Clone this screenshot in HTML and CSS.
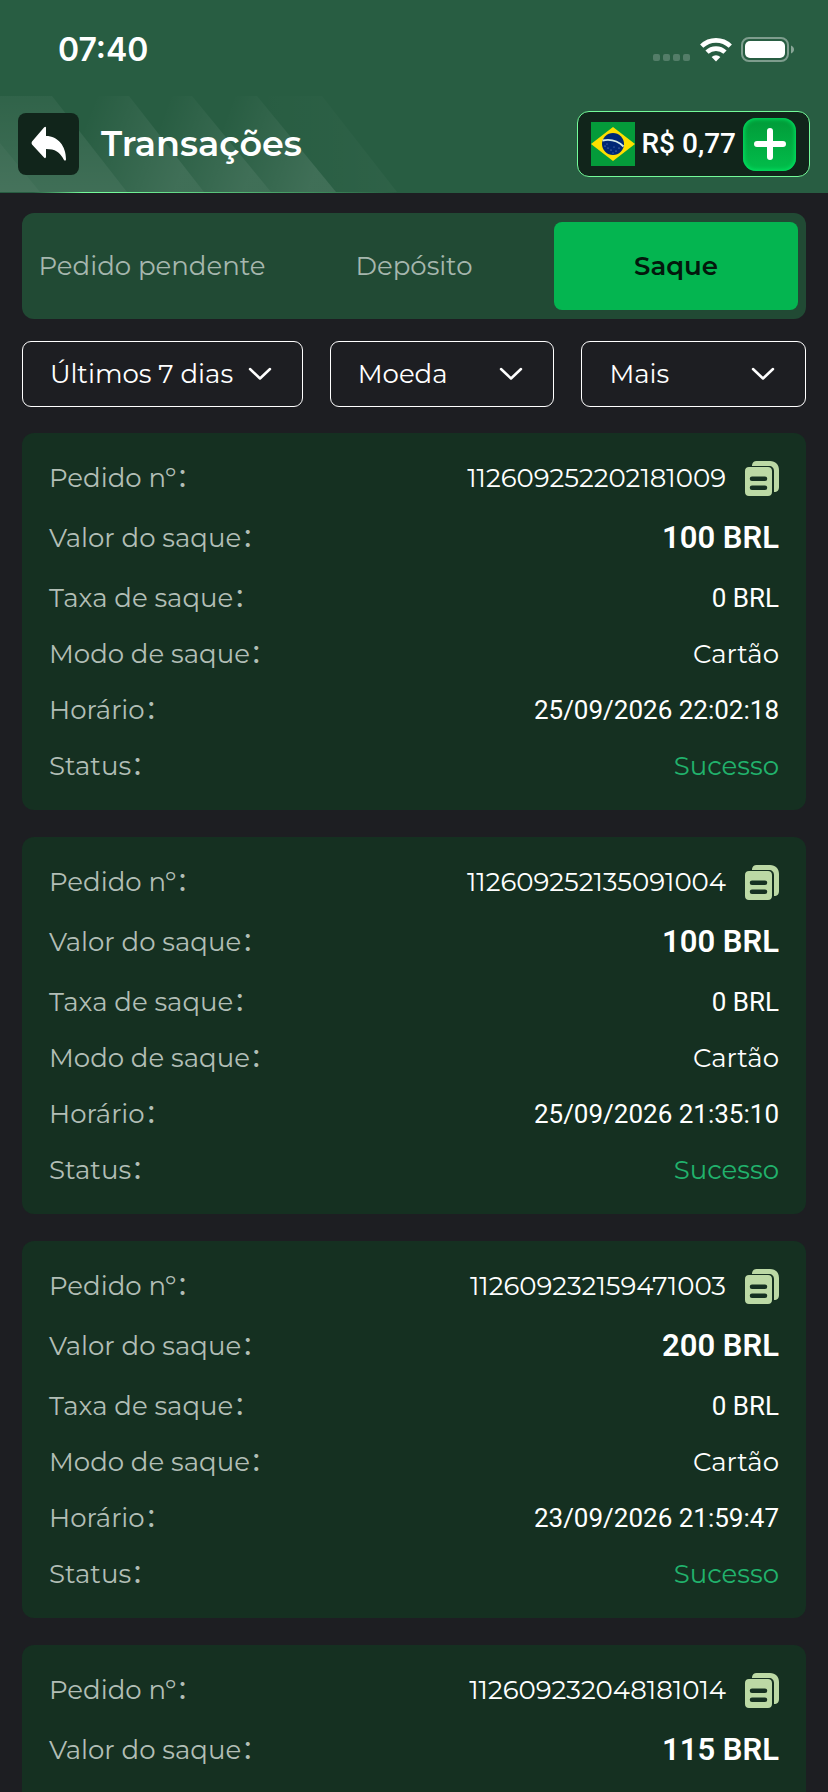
FILE: index.html
```html
<!DOCTYPE html>
<html lang="pt-BR">
<head>
    <meta charset="UTF-8">
    <meta name="viewport" content="width=device-width, initial-scale=1.0">
    <title>Transações</title>
    <link rel="stylesheet" href="styles.css">
</head>
<body>
    <!-- shared icons -->
    <svg class="sprite" aria-hidden="true">
        <symbol id="copy" viewBox="0 0 34 35">
            <path d="M7 4C7.500 1.500 9 0 11.500 0H25C30.500 0 34 3.500 34 9V26C34 29 32.500 31 29 31V10C29 7 27 5 24 5H7Z"/>
            <path fill-rule="evenodd" d="M4 6H23C25.500 6 27 7.500 27 10V31C27 33.500 25.500 35 23 35H4C1.500 35 0 33.500 0 31V10C0 7.500 1.500 6 4 6ZM7 15.500A2 2 0 0 0 7 20H20A2 2 0 0 0 20 15.500ZM7 24.500A2 2 0 0 0 7 29H20A2 2 0 0 0 20 24.500Z"/>
        </symbol>
        <symbol id="chevron" viewBox="0 0 24 14">
            <path d="M2 2L12 11.500L22 2" fill="none" stroke="#fff" stroke-width="2.500" stroke-linecap="round" stroke-linejoin="round"/>
        </symbol>
    </svg>

    <div class="top">
        <div class="status-bar">
            <span class="time">07:40</span>
            <div class="status-icons">
                <svg width="38" height="26" viewBox="0 0 38 26" aria-hidden="true">
                    <g fill="#fff" opacity="0.200">
                        <rect x="0" y="17" width="7" height="7" rx="2"/>
                        <rect x="10" y="17" width="7" height="7" rx="2"/>
                        <rect x="20" y="17" width="7" height="7" rx="2"/>
                        <rect x="30" y="17" width="7" height="7" rx="2"/>
                    </g>
                </svg>
                <svg width="32" height="26" viewBox="0 0 32 26" aria-hidden="true">
                    <g fill="none" stroke="#fff" stroke-width="4.600">
                        <path d="M1.700 9.200A20.500 20.500 0 0 1 30.300 9.200"/>
                        <path d="M7 15.200A13 13 0 0 1 25 15.200"/>
                    </g>
                    <path d="M16 24.500L11.600 20A6.500 6.500 0 0 1 20.400 20Z" fill="#fff"/>
                </svg>
                <svg width="54" height="26" viewBox="0 0 54 26" aria-hidden="true">
                    <rect x="1" y="1" width="46" height="23" rx="7" fill="none" stroke="#fff" stroke-opacity="0.400" stroke-width="2"/>
                    <rect x="4" y="4" width="40" height="17" rx="5" fill="#fff"/>
                    <path d="M50 8.500C54 10 54 15 50 16.500Z" fill="#fff" opacity="0.450"/>
                </svg>
            </div>
        </div>

        <header class="header">
            <svg class="stripes" width="400" height="96" viewBox="0 0 400 96" aria-hidden="true">
                <defs>
                    <linearGradient id="fade" x1="0.200" y1="0" x2="1" y2="0.200">
                        <stop offset="0.100" stop-color="#fff" stop-opacity="0"/>
                        <stop offset="1" stop-color="#fff" stop-opacity="0.110"/>
                    </linearGradient>
                    <linearGradient id="fadeEnd" x1="0" y1="0" x2="1" y2="0">
                        <stop offset="0" stop-color="#fff" stop-opacity="0"/>
                        <stop offset="1" stop-color="#fff" stop-opacity="0.030"/>
                    </linearGradient>
                    <linearGradient id="fadeStart" x1="0" y1="0" x2="0" y2="1">
                        <stop offset="0" stop-color="#fff" stop-opacity="0.040"/>
                        <stop offset="1" stop-color="#fff" stop-opacity="0.110"/>
                    </linearGradient>
                </defs>
                <path d="M0 0H52L127 96H0Z" fill="url(#fadeStart)"/>
                <path d="M0 47L40 96H0Z" fill="#fff" opacity="0.030"/>
                <path d="M52 0H129L204 96H127Z" fill="url(#fade)"/>
                <path d="M129 0H192L271 96H204Z" fill="url(#fade)"/>
                <path d="M192 0H257L336 96H271Z" fill="url(#fade)"/>
                <path d="M257 0H322L397 96H336Z" fill="url(#fadeEnd)"/>
            </svg>
            <button class="back" type="button" aria-label="Voltar">
                <svg width="36" height="36" viewBox="0 0 36 36" aria-hidden="true">
                    <path d="M15 1.500V10C27 10 35 20 35 33.500Q34.500 35.500 33 34C29 26 24 23 15 23V31Q14.500 33 13 31.500L1 18.500Q0 17 1 15.500L13 1.500Q14.500 0 15 1.500Z" fill="#fff"/>
                </svg>
            </button>
            <h1>Transações</h1>
            <div class="balance">
                <svg class="flag" width="44" height="44" viewBox="0 0 44 44" aria-hidden="true">
                    <rect width="44" height="44" fill="#049b3a"/>
                    <path d="M0 22L22 5L44 22L22 39Z" fill="#fedf00"/>
                    <circle cx="22" cy="22" r="11" fill="#002776"/>
                    <path d="M11.500 18.500C19 17 27 19 32.500 24.500" fill="none" stroke="#d5ebe5" stroke-width="1.800"/>
                    <g fill="#8fa4d0">
                        <circle cx="14" cy="24" r="0.600"/><circle cx="17" cy="26" r="0.600"/>
                        <circle cx="16" cy="22" r="0.500"/><circle cx="20" cy="28" r="0.600"/>
                        <circle cx="23" cy="25" r="0.500"/><circle cx="25" cy="29" r="0.600"/>
                        <circle cx="28" cy="26" r="0.600"/><circle cx="22" cy="31" r="0.500"/>
                    </g>
                </svg>
                <span class="amount">R$ 0,77</span>
                <button class="add" type="button" aria-label="Depositar">
                    <svg width="32" height="32" viewBox="0 0 32 32" aria-hidden="true">
                        <path d="M16 3V29M3 16H29" stroke="#fff" stroke-width="6" stroke-linecap="round"/>
                    </svg>
                </button>
            </div>
        </header>
    </div>

    <main class="container">
        <nav class="tabs">
            <button class="tab" type="button">Pedido pendente</button>
            <button class="tab" type="button">Depósito</button>
            <button class="tab active" type="button">Saque</button>
        </nav>

        <form class="filters">
            <div class="filter">
                <select aria-label="Período"><option>Últimos 7 dias</option></select>
                <svg width="24" height="14"><use href="#chevron"/></svg>
            </div>
            <div class="filter">
                <select aria-label="Moeda"><option>Moeda</option></select>
                <svg width="24" height="14"><use href="#chevron"/></svg>
            </div>
            <div class="filter">
                <select aria-label="Mais"><option>Mais</option></select>
                <svg width="24" height="14"><use href="#chevron"/></svg>
            </div>
        </form>

        <dl class="card">
            <div class="row">
                <dt>Pedido nº：</dt>
                <dd class="order">112609252202181009
                    <button class="copy" type="button" aria-label="Copiar"><svg width="34" height="35"><use href="#copy"/></svg></button>
                </dd>
            </div>
            <div class="row total"><dt>Valor do saque：</dt><dd>100 BRL</dd></div>
            <div class="row"><dt>Taxa de saque：</dt><dd class="num">0 BRL</dd></div>
            <div class="row"><dt>Modo de saque：</dt><dd>Cartão</dd></div>
            <div class="row"><dt>Horário：</dt><dd class="num">25/09/2026 22:02:18</dd></div>
            <div class="row"><dt>Status：</dt><dd class="success">Sucesso</dd></div>
        </dl>

        <dl class="card">
            <div class="row">
                <dt>Pedido nº：</dt>
                <dd class="order">112609252135091004
                    <button class="copy" type="button" aria-label="Copiar"><svg width="34" height="35"><use href="#copy"/></svg></button>
                </dd>
            </div>
            <div class="row total"><dt>Valor do saque：</dt><dd>100 BRL</dd></div>
            <div class="row"><dt>Taxa de saque：</dt><dd class="num">0 BRL</dd></div>
            <div class="row"><dt>Modo de saque：</dt><dd>Cartão</dd></div>
            <div class="row"><dt>Horário：</dt><dd class="num">25/09/2026 21:35:10</dd></div>
            <div class="row"><dt>Status：</dt><dd class="success">Sucesso</dd></div>
        </dl>

        <dl class="card">
            <div class="row">
                <dt>Pedido nº：</dt>
                <dd class="order">112609232159471003
                    <button class="copy" type="button" aria-label="Copiar"><svg width="34" height="35"><use href="#copy"/></svg></button>
                </dd>
            </div>
            <div class="row total"><dt>Valor do saque：</dt><dd>200 BRL</dd></div>
            <div class="row"><dt>Taxa de saque：</dt><dd class="num">0 BRL</dd></div>
            <div class="row"><dt>Modo de saque：</dt><dd>Cartão</dd></div>
            <div class="row"><dt>Horário：</dt><dd class="num">23/09/2026 21:59:47</dd></div>
            <div class="row"><dt>Status：</dt><dd class="success">Sucesso</dd></div>
        </dl>

        <dl class="card last">
            <div class="row">
                <dt>Pedido nº：</dt>
                <dd class="order">112609232048181014
                    <button class="copy" type="button" aria-label="Copiar"><svg width="34" height="35"><use href="#copy"/></svg></button>
                </dd>
            </div>
            <div class="row total"><dt>Valor do saque：</dt><dd>115 BRL</dd></div>
        </dl>
    </main>
</body>
</html>
```
FILE: styles.css
```css
* {
    box-sizing: border-box;
}
body {
    margin: 0;
    background-color: #1d1e22;
    color: #fff;
    font-family: Montserrat, Inter, "Noto Sans CJK SC", sans-serif;
    font-size: 26px;
    font-weight: 400;
    line-height: 32px;
}
button, select {
    font: inherit;
    color: inherit;
    border: none;
    padding: 0;
    background: none;
    cursor: pointer;
}
svg {
    display: block;
    flex: none;
}
h1, dl, dd {
    margin: 0;
}
.sprite {
    position: absolute;
    width: 0;
    height: 0;
}
.top {
    background-color: #285d42;
}
.status-bar {
    display: flex;
    justify-content: space-between;
    align-items: center;
    height: 96px;
    padding: 3px 33px 0 58px;
}
.time {
    font-family: Inter, sans-serif;
    font-size: 32px;
    font-weight: 600;
}
.status-icons {
    display: flex;
    gap: 9px;
}
.header {
    position: relative;
    display: flex;
    align-items: center;
    height: 97px;
    padding: 0 18px 1px;
    background: linear-gradient(90deg, transparent 4%, #74fb9a 10%, #74fb9a 14%, transparent 48%) bottom / 100% 1px no-repeat;
}
.stripes {
    position: absolute;
    top: 0;
    left: 0;
}
.back {
    position: relative;
    display: grid;
    place-items: center;
    width: 61px;
    height: 62px;
    border-radius: 8px;
    background-color: #11251b;
}
.header h1 {
    position: relative;
    margin-left: 22px;
    font-size: 35px;
    font-weight: 600;
    line-height: 40px;
}
.balance {
    display: flex;
    align-items: center;
    height: 66px;
    margin-left: auto;
    padding: 0 13px;
    border: 1px solid #74fb9a;
    border-radius: 12px;
    background-color: #11251b;
}
.amount {
    margin: 0 7px;
    font-family: Roboto, sans-serif;
    font-size: 28px;
    font-weight: 500;
}
.add {
    display: grid;
    place-items: center;
    width: 53px;
    height: 53px;
    border-radius: 13px;
    background: linear-gradient(#019a38, #02be4b);
    box-shadow: inset 0 0 4px 1px #00e765;
}
.container {
    padding: 20px 22px 0;
}
.tabs {
    display: grid;
    grid-template-columns: repeat(3, 1fr);
    gap: 18px;
    padding: 9px 8px;
    border-radius: 12px;
    background-color: #214a34;
}
.tab {
    height: 88px;
    border-radius: 8px;
    color: #a6b7ae;
    white-space: nowrap;
}
.tab.active {
    background-color: #04b550;
    color: #03180c;
    font-weight: 600;
}
.filters {
    display: grid;
    grid-template-columns: 5fr 4fr 4fr;
    gap: 27px;
    margin: 22px 0 26px;
}
.filter {
    display: flex;
    align-items: center;
    height: 66px;
    padding: 0 30px 0 27px;
    border: 1px solid #fff;
    border-radius: 9px;
}
.filter select {
    flex: 1;
    min-width: 0;
    appearance: none;
}
.card {
    display: flex;
    flex-direction: column;
    gap: 24px;
    margin-bottom: 27px;
    padding: 29px 27px 28px;
    border-radius: 12px;
    background-color: #153021;
}
.card.last {
    margin-bottom: 0;
    border-radius: 12px 12px 0 0;
}
.row {
    display: flex;
    justify-content: space-between;
    align-items: center;
    height: 32px;
}
.row dt {
    color: #b2beb6;
}
.row.total {
    height: 40px;
}
.row.total dd {
    font-family: Roboto, sans-serif;
    font-size: 31px;
    font-weight: 600;
}
.row .num {
    font-family: Roboto, sans-serif;
}
.order {
    display: flex;
    align-items: center;
    gap: 19px;
}
.success {
    color: #21b26c;
}
.copy svg {
    fill: #bcd9a5;
}
```
